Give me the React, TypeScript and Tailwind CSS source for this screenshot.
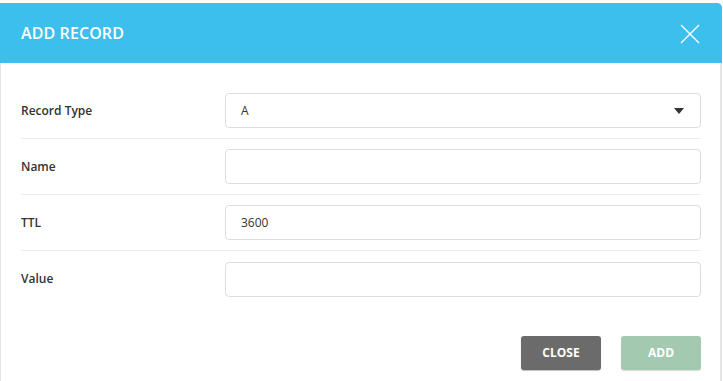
import React from "react";

const rows = [
  { label: "Record Type", value: "A", select: true },
  { label: "Name", value: "" },
  { label: "TTL", value: "3600" },
  { label: "Value", value: "" },
];

export default function App() {
  return (
    <div
      className="w-[723px] h-[381px] bg-white pt-[3px] overflow-hidden"
      style={{ fontFamily: '"Open Sans", "Noto Sans", sans-serif' }}
    >
      <div className="w-[722px] h-[378px] border-r-[2px] border-l border-[#e3e3e3] rounded-tr-[5px] flex flex-col">
        <div className="shrink-0 h-[60px] bg-[#3dbfee] rounded-tr-[5px] flex items-center justify-between pl-[21px] pr-[22px] -mr-[2px] -ml-px">
          <span className="text-white text-[16px] font-semibold tracking-[0.1px]">ADD RECORD</span>
          <svg width="20" height="20" viewBox="0 0 20 20" className="mt-px">
            <path d="M1 1 L19 19 M19 1 L1 19" stroke="#ffffff" strokeWidth="1.4" fill="none" />
          </svg>
        </div>
        <div className="shrink-0 pl-[20px] pr-[19px] pt-[20px]">
          {rows.map((r, i) => (
            <div
              key={r.label}
              className={`flex items-center h-[56px] ${i < rows.length - 1 ? "border-b border-[#ececec]" : ""}`}
            >
              <div className="w-[204px] text-[12px] font-semibold text-[#333]">{r.label}</div>
              <div className="w-[476px] h-[35px] border border-[#dedede] rounded-[4px] flex items-center justify-between pl-[15px] pr-[16px] text-[12px] text-[#333]">
                <span>{r.value}</span>
                {r.select && (
                  <svg width="10" height="6" viewBox="0 0 10 6">
                    <path d="M0 0 H10 L5 6 Z" fill="#333" />
                  </svg>
                )}
              </div>
            </div>
          ))}
        </div>
        <div className="shrink-0 flex justify-end gap-[20px] pr-[19px] pt-[29px]">
          <button className="w-[80px] h-[34px] rounded-[3px] bg-[#6b6b6b] text-white text-[12px] font-bold shadow-[0_1px_1px_rgba(0,0,0,0.25)]">
            CLOSE
          </button>
          <button className="w-[80px] h-[34px] rounded-[3px] bg-[#a3c9b0] text-white text-[12px] font-bold shadow-[0_1px_1px_rgba(0,0,0,0.15)]">
            ADD
          </button>
        </div>
      </div>
    </div>
  );
}
